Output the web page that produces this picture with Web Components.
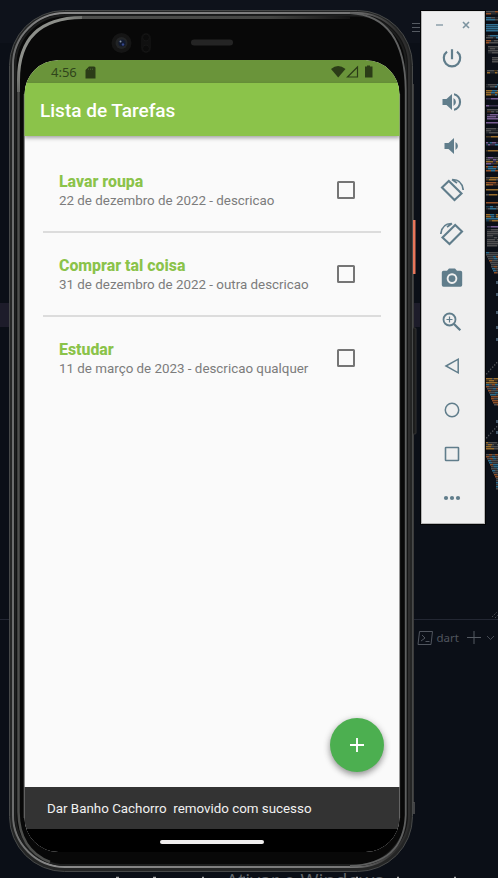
<!DOCTYPE html>
<html lang="pt-BR">
<head>
<meta charset="utf-8">
<title>Lista de Tarefas</title>
<style>
html,body{margin:0;width:498px;height:878px;overflow:hidden;background:#0b0f17;font-family:Roboto,"Liberation Sans",sans-serif}
</style>
</head>
<body>
<emu-desktop>
  <editor-backdrop slot="back"></editor-backdrop>
  <phone-device slot="phone">
    <status-bar></status-bar>
    <app-bar>Lista de Tarefas</app-bar>
    <task-list>
      <task-item name="Lavar roupa">22 de dezembro de 2022 - descricao</task-item>
      <task-item name="Comprar tal coisa">31 de dezembro de 2022 - outra descricao</task-item>
      <task-item name="Estudar">11 de março de 2023 - descricao qualquer</task-item>
    </task-list>
    <fab-button></fab-button>
    <snack-bar>Dar Banho Cachorro&nbsp; removido com sucesso</snack-bar>
    <nav-pill></nav-pill>
  </phone-device>
  <emu-toolbar slot="tools"></emu-toolbar>
</emu-desktop>
<script>
function define(name, html, init){
  customElements.define(name, class extends HTMLElement{
    constructor(){super();this.attachShadow({mode:'open'});}
    connectedCallback(){
      this.shadowRoot.innerHTML = html;
      if(init) init(this.shadowRoot, this);
    }
  });
}

define('emu-desktop', `<style>
:host{display:block;position:relative;width:498px;height:878px;overflow:hidden}
slot{display:block;position:absolute}
.back{left:0;top:0}.phone{left:9px;top:10px}.tools{left:421px;top:11px}
</style><slot name="back" class="back"></slot><slot name="phone" class="phone"></slot><slot name="tools" class="tools"></slot>`);

define('editor-backdrop', `<style>
:host{display:block;position:relative;width:498px;height:878px;overflow:hidden}
svg{display:block}
.term{position:absolute;left:416.5px;top:629px;display:flex;align-items:center;height:17px;color:#50555e;font:11.5px "Noto Sans",sans-serif}
.term span{margin:0 7.500px 0 3px}
.mark{position:absolute;left:226px;top:867px;white-space:nowrap;color:#62656a;font:19.5px/27px "Open Sans",sans-serif}
</style>
<svg width="498" height="878" viewBox="0 0 498 878">
<rect width="498" height="878" fill="#0b0f17"/><rect width="498" height="43" fill="#0e121b"/>
<rect y="303" width="498" height="24" fill="#1d1c2a"/>
<rect x="484" y="11" width="14" height="608" fill="#0b0f17"/>
<path d="M0 619.5H498" stroke="#232733"/>
<path d="M412 23.5H421M412 27.5H421M412 31.5H421" stroke="#555a62"/>
<g id="map"></g>
<path d="M492 617l5-5M495 618l3-3" stroke="#484b50" stroke-dasharray="1.5 1"/>
<path d="M116 877.500h3M153 877.500h3M202 877.500h2M243 877.500h2M356 877.500h2M397 877.500h2M454 877.500h2" stroke="#a9a9a9" stroke-width="1.500"/>
</svg>
<div class="term">
<svg width="17" height="17" fill="none" stroke="#50555e"><path d="M2.5 2.5H15.5L14 15.5H1ZM5 6l3 3-4 3M8.500 12.500h4"/></svg><span>dart</span>
<svg width="17" height="17" stroke="#555a62"><path d="M1 8.500h14M8 2v13"/></svg>
<svg width="15" height="17" fill="none" stroke="#454a53"><path d="M4 7l3.500 3.500L11 7"/></svg>
</div>
<div class="mark">Ativar o Windows</div>`, root=>{
  // Code minimap: [first row, last row, left offset, colours]
  const C={o:'#a35a2b',b:'#347a9e',g:'#585858',p:'#8466a0',y:'#a87830',d:'#343d45'};
  const bands=[[11,14,0,'ogd'],[17,20,0,'gb'],[24,31,0,'bb'],[35,38,0,'bg'],[40,44,0,'og'],[46,54,2,'g'],[57,63,6,'g'],[70,74,1,'yg'],[84,88,0,'gb'],[90,95,0,'by'],[98,100,0,'p'],[105,107,0,'p'],[109,113,1,'og'],[114,119,1,'p'],[122,124,0,'p'],[128,133,0,'g'],[136,138,0,'y'],[142,146,0,'pb'],[150,152,0,'y'],[157,160,0,'pg'],[161,164,0,'py'],[166,171,0,'bo'],[177,180,0,'yg'],[182,185,0,'oy'],[189,191,0,'y'],[194,196,0,'yg'],[202,204,0,'o'],[206,209,0,'gb'],[214,222,0,'by'],[226,228,1,'p'],[229,247,1,'g'],[378,384,0,'yg'],[442,450,0,'yg']];
  let s='',k=7;
  const rnd=()=>(k=(k*1103515245+12345)&0x7fffffff)/0x7fffffff;
  for(const [a,b,x,c] of bands) for(let y=a;y<b;y+=2) for(let i=x;i<12;){
    const w=Math.min(2+Math.floor(rnd()*4),12-i), q=rnd();
    s+=`<rect x="${486+i}" y="${y}" width="${w}" height="1.5" fill="${C[c[Math.floor(rnd()*c.length)]]}" opacity="${q<.2?.4:.9}"/>`; i+=w;
  }
  for(const [a,b] of [[252,273],[384,405],[454,490]]) for(let y=a;y<b;y+=2){
    const x=Math.min(10,Math.floor((y-a)*.42));
    for(let i=x;i<12;i+=3) s+=`<rect x="${486+i}" y="${y}" width="${Math.min(3,12-i)}" height="1.500" fill="${C['oggbg'[Math.floor(rnd()*5)]]}" opacity=".85"/>`;
  }
  for(const y of [281,293,311,326,338,420,431]) s+=`<rect x="496" y="${y}" width="2" height="3" fill="#44586a"/>`;
  for(const y of [373,437]) for(let i=0;i<6;i++) s+=`<rect x="${486+i*2}" y="${y-i*2.2}" width="1.300" height="1.500" fill="#4a4d51"/>`;
  root.querySelector('#map').innerHTML=s;
});

define('phone-device', `<style>
:host{display:block;position:relative;width:404px;height:862px}
.shell{position:absolute;left:0;top:0}
.screen{position:relative;box-sizing:border-box;margin:0 0 0 15px;top:50px;width:376px;height:792px;border-radius:34px;overflow:hidden;display:flex;flex-direction:column;background:#fafafa;clip-path:inset(0 .5px 0 .5px round 34px)}
::slotted(task-list){flex:1}
</style>
<svg class="shell" width="408" height="864" viewBox="9 10 408 864">
<defs><linearGradient id="e"><stop stop-color="#6c6d6d"/><stop offset=".1" stop-color="#8a8a8a"/><stop offset=".85" stop-color="#777"/><stop offset=".97" stop-color="#2e2e2e"/></linearGradient>
<linearGradient id="a" gradientUnits="userSpaceOnUse" x1="10" y1="100" x2="100" y2="10"><stop stop-color="#4e4f4d"/><stop offset=".25" stop-color="#8d8f8a"/><stop offset=".75" stop-color="#8d8f8a"/><stop offset="1" stop-color="#4e4f4d"/></linearGradient>
<linearGradient id="t" gradientUnits="userSpaceOnUse" x1="80" y1="0" x2="350" y2="0"><stop stop-color="#4e4f4d"/><stop offset=".7" stop-color="#444543"/><stop offset="1" stop-color="#141414"/></linearGradient></defs>
<path d="M412 84h2v719h-2z" fill="#3b3b3b"/>
<rect x="412" y="220" width="3.500" height="54" fill="#e8765b"/>
<rect x="412" y="328" width="4" height="106" rx="1" fill="#1c1d1d" stroke="#333"/>
<path d="M414 802v12" stroke="#555" stroke-width="1.500"/>
<rect x="9.500" y="10.500" width="403" height="861" rx="55" fill="#242525" stroke="#474949"/>
<rect x="13" y="13" width="396" height="854" rx="52" fill="#141414" stroke="url(#e)" stroke-width="2"/>
<rect x="15.500" y="15.500" width="390.500" height="849.500" rx="50" fill="#080808" stroke="#1d1e1e" stroke-width="2"/>
<path d="M82 17.500H350" fill="none" stroke="url(#t)" stroke-width="3"/>
<path d="M18.500 80V812Q19 850 50 862" fill="none" stroke="#4e4f4d" stroke-width="2.500"/>
<path d="M18.500 92V80Q18.500 18 82 17.500" fill="none" stroke="url(#a)" stroke-width="3"/>
<path d="M405.700 90V815Q404 864 350 866" fill="none" stroke="#5e5f5f" stroke-width="1.800"/>
<path d="M350 13Q405 16 405.700 90" fill="none" stroke="#606161" stroke-width="1.800"/>
<path d="M399.700 94V818M24 94V818" stroke="#404040"/>
<circle cx="121.500" cy="43" r="10" fill="#151515"/><circle cx="121.500" cy="43" r="6" fill="#222426"/><circle cx="122" cy="43" r="3.600" fill="#111a30"/><circle cx="120.500" cy="41.500" r="1" fill="#8492a3"/><circle cx="123" cy="44.500" r="1.200" fill="#35478b"/>
<rect x="141" y="33" width="10" height="20" rx="5" fill="#101010"/><circle cx="146" cy="37.500" r="3.500" fill="#0b0b0b" stroke="#151515"/><circle cx="146" cy="48.500" r="3.500" fill="#0b0b0b" stroke="#151515"/>
<rect x="191" y="39.500" width="42" height="6" rx="3" fill="#242424"/>
</svg>
<div class="screen"><slot></slot></div>`);

define('status-bar', `<style>
:host{display:flex;box-sizing:border-box;flex:none;height:23px;align-items:center;padding:1px 26px 0 27px;background:#6a943a;color:#30451b;font:13px/20px "Noto Sans",sans-serif}
i{flex:1}svg{display:block}.sd{margin-left:8px}
</style><span>4:56</span>
<svg class="sd" width="11" height="13" fill="#2b3c17"><path d="M4 .5H9Q10.500.5 10.500 2V12.500H.5V4Z"/><path d="M3.500 2.500v1.500M5.500 2.500v1.500M7.500 2.500v1.500" stroke="#41592a"/></svg><i></i>
<svg width="43" height="14" fill="#2b3c17"><path d="M0 4Q7-1.800 14.500 4L7.200 12.500Z"/><path d="M16.500 12L26.500 2V12Z" fill="none" stroke="#2b3c17" stroke-width="1.200"/><path d="M36 1.500V.5H39V1.500H41.500V12.500H34V1.500Z"/></svg>`);

define('app-bar', `<style>
:host{display:flex;flex:none;align-items:center;height:53px;padding:2px 0 0 16px;box-sizing:border-box;background:#8bc34a;color:#fff;font-size:19px;font-weight:500;box-shadow:0 2px 4px rgba(0,0,0,.35);position:relative}
</style><span><slot></slot></span>`);

define('task-list', `<style>
:host{display:block;padding:13px 19px 0 19px}
::slotted(task-item){border-bottom:2px solid #dcdcdc}
::slotted(task-item:last-child){border-color:transparent}
</style><slot></slot>`);

define('task-item', `<style>
:host{display:flex;box-sizing:border-box;height:84px;padding:0 26px 0 16px;align-items:center;justify-content:space-between}
div:first-of-type{padding-top:1.5px}
b{display:block;font-size:15.9px;line-height:19px;color:#8bc34a;font-weight:800}
p{margin:0;font-size:13.37px;line-height:19px;color:#7c7c7c;white-space:nowrap}
.box{width:18px;height:18px;box-sizing:border-box;border:2px solid #757575;border-radius:1.500px}
</style><div><b></b><p><slot></slot></p></div><div class="box"></div>`,(r,h)=>{r.querySelector('b').textContent=h.getAttribute('name')});

define('fab-button', `<style>
:host{position:absolute;left:306px;top:658px;width:54px;height:54px;border-radius:50%;background:#4caf50;display:grid;place-items:center;box-shadow:0 3px 6px rgba(0,0,0,.36),0 1px 9px rgba(0,0,0,.1)}
</style><svg width="16" height="16" stroke="#fff" stroke-width="1.900"><path d="M1 8H15M8 1V15"/></svg>`);

define('snack-bar', `<style>
:host{display:flex;flex:none;height:42px;align-items:center;padding-left:23px;background:#333;color:#f1f1f1;font-size:13.37px;white-space:nowrap;position:relative}
</style><span><slot></slot></span>`);

define('nav-pill', `<style>
:host{display:flex;flex:none;height:23px;background:#000;justify-content:center;align-items:center}
div{width:104px;height:4px;border-radius:2px;background:#f0eeee;margin-top:3px}
</style><div></div>`);

define('emu-toolbar', `<style>
:host{display:flex;flex-direction:column;box-sizing:border-box;width:64px;height:513px;background:#efefef;border:1px solid #b5b5b5;border-top-color:#e0e0e0;box-shadow:0 0 0 1px #030405}
header{height:24px;display:flex;justify-content:flex-end;align-items:center;gap:18px;padding:1px 14px 0 0;flex:none;box-sizing:border-box}
nav{display:flex;flex-direction:column;align-items:center}
nav svg{width:24px;height:24px;margin:10px 0;margin-left:-2px;display:block;fill:#607d8b;flex:none}
nav .l{fill:none;stroke:#607d8b;stroke-width:1.700}
</style><header>
<svg width="8" height="8" stroke="#8ea1ab" stroke-width="1.500"><path d="M0 4H7"/></svg>
<svg width="8" height="8" stroke="#7c939f" stroke-width="1.600"><path d="M1 1L7 7M7 1L1 7"/></svg></header>
<nav>
<svg viewBox="0 0 24 24" class="l" style="stroke-width:2.200"><path d="M12 3.200V13.200M7 5.600A8.200 8.200 0 1 0 17 5.600"/></svg>
<svg viewBox="0 0 24 24"><path d="M2.500 9v6H6.500L12 20V4L6.500 9ZM13.500 8v8a4.500 4.500 0 0 0 0-8ZM14 3.200v2.100a7 7 0 0 1 0 13.400v2.100a9 9 0 0 0 0-17.600Z"/></svg>
<svg viewBox="0 0 24 24"><path d="M4.500 9v6H8.500L14 20V4L8.500 9ZM15.500 8v8a4.500 4.500 0 0 0 0-8Z"/></svg>
<svg viewBox="0 0 24 24" class="l"><path d="M2 9.500L8.800 3L21.500 15.500L14.500 22Z" stroke-width="2.100"/><path d="M12.500 1.500Q22 1.500 23.200 12M12 1.500L17 5"/></svg>
<svg viewBox="0 0 24 24" class="l"><g transform="matrix(-1 0 0 1 24 0)"><path d="M2 9.500L8.800 3L21.500 15.500L14.500 22Z" stroke-width="2.100"/><path d="M12.500 1.500Q22 1.500 23.200 12M12 1.500L17 5"/></g></svg>
<svg viewBox="0 0 24 24"><path fill-rule="evenodd" d="M9 2.500H15L17 4.700H20.500Q22.200 4.700 22.200 6.500V19Q22.200 20.700 20.500 20.700H3.500Q1.800 20.700 1.800 19V6.500Q1.800 4.700 3.500 4.700H7ZM12 7.300a5.300 5.300 0 1 0 .01 0Z"/><circle cx="12" cy="12.600" r="3.400"/></svg>
<svg viewBox="0 0 24 24" class="l" style="stroke-width:1.800"><circle cx="9.500" cy="9.500" r="6"/><path d="M6.500 9.500h6M9.500 6.500v6" stroke-width="1.200"/><path d="M14 14L20.300 20.300" stroke-width="2.300"/></svg>
<svg viewBox="0 0 24 24" class="l" style="stroke-width:1.500"><path d="M6 12L18.200 5.200V18.800Z"/></svg>
<svg viewBox="0 0 24 24" class="l" style="stroke-width:1.500"><circle cx="12" cy="12" r="6.700"/></svg>
<svg viewBox="0 0 24 24" class="l" style="stroke-width:1.600"><rect x="5.500" y="5.500" width="13" height="13" rx=".5"/></svg>
<svg viewBox="0 0 24 24"><circle cx="6" cy="12" r="2.100"/><circle cx="12" cy="12" r="2.100"/><circle cx="18" cy="12" r="2.100"/></svg>
</nav>`);
</script>
</body>
</html>
